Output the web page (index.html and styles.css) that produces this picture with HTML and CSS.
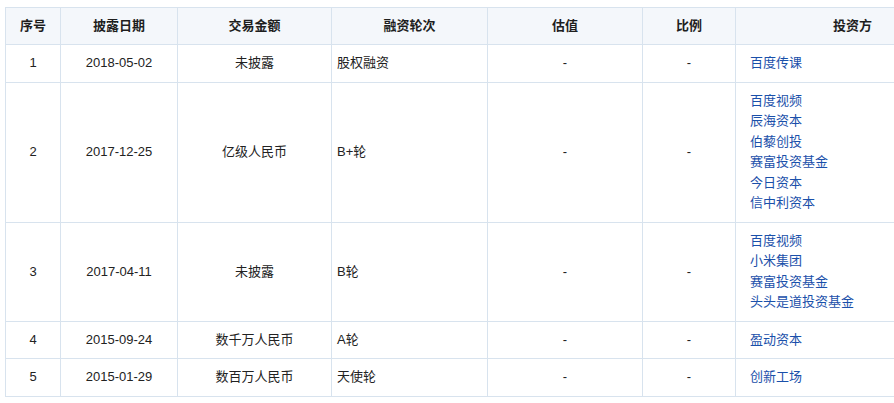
FILE: index.html
```html
<!DOCTYPE html>
<html lang="zh">
<head>
<meta charset="utf-8">
<title>融资历程</title>
<link rel="stylesheet" href="styles.css">
</head>
<body>
<div class="frame">
<table class="fin">
  <colgroup>
    <col class="c-no"><col class="c-date"><col class="c-amt"><col class="c-round"><col class="c-val"><col class="c-ratio"><col class="c-inv">
  </colgroup>
  <thead>
    <tr><th>序号</th><th>披露日期</th><th>交易金额</th><th>融资轮次</th><th>估值</th><th>比例</th><th>投资方</th></tr>
  </thead>
  <tbody>
    <tr><td class="ctr">1</td><td class="ctr">2018-05-02</td><td class="ctr">未披露</td><td>股权融资</td><td class="ctr">-</td><td class="ctr">-</td>
      <td class="inv"><a href="#">百度传课</a></td></tr>
    <tr><td class="ctr">2</td><td class="ctr">2017-12-25</td><td class="ctr">亿级人民币</td><td>B+轮</td><td class="ctr">-</td><td class="ctr">-</td>
      <td class="inv"><a href="#">百度视频</a><a href="#">辰海资本</a><a href="#">伯藜创投</a><a href="#">赛富投资基金</a><a href="#">今日资本</a><a href="#">信中利资本</a></td></tr>
    <tr><td class="ctr">3</td><td class="ctr">2017-04-11</td><td class="ctr">未披露</td><td>B轮</td><td class="ctr">-</td><td class="ctr">-</td>
      <td class="inv"><a href="#">百度视频</a><a href="#">小米集团</a><a href="#">赛富投资基金</a><a href="#">头头是道投资基金</a></td></tr>
    <tr><td class="ctr">4</td><td class="ctr">2015-09-24</td><td class="ctr">数千万人民币</td><td>A轮</td><td class="ctr">-</td><td class="ctr">-</td>
      <td class="inv"><a href="#">盈动资本</a></td></tr>
    <tr><td class="ctr">5</td><td class="ctr">2015-01-29</td><td class="ctr">数百万人民币</td><td>天使轮</td><td class="ctr">-</td><td class="ctr">-</td>
      <td class="inv"><a href="#">创新工场</a></td></tr>
  </tbody>
</table>
</div>
</body>
</html>
```
FILE: styles.css
```css
html, body {
  margin: 0;
  background: #ffffff;
}
body {
  width: 894px;
  height: 403px;
  overflow: hidden;
  font-family: "Liberation Sans", Arial, "Noto Sans CJK SC", sans-serif;
  font-size: 13px;
  color: #222222;
}
.frame {
  width: 889px;
  padding: 7px 0 0 5px;
  overflow: hidden;
}
.fin {
  border-collapse: collapse;
  table-layout: fixed;
  width: 964px;
}
.c-no { width: 55px; }
.c-date { width: 117px; }
.c-amt { width: 154px; }
.c-round { width: 156px; }
.c-val { width: 155px; }
.c-ratio { width: 93px; }
.c-inv { width: 234px; }

.fin th, .fin td {
  border: 1px solid #d8e3ee;
  padding: 8px 5px 8px 5px;
  line-height: 20px;
  vertical-align: middle;
}
.fin th {
  background: #f4f7fb;
  font-weight: 600;
  color: #1e1e1e;
  text-align: center;
}
.fin td {
  text-align: left;
  color: #222222;
}
.fin td.ctr {
  text-align: center;
}
.fin td.inv {
  padding-left: 14px;
}
.inv a {
  display: block;
  color: #1a50aa;
  text-decoration: none;
  line-height: 20.5px;
}
```
